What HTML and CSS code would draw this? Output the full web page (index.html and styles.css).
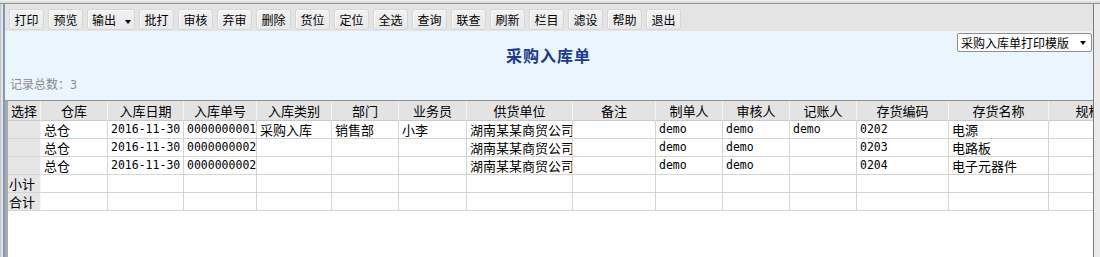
FILE: index.html
```html
<!DOCTYPE html>
<html lang="zh-CN">
<head>
    <meta charset="UTF-8">
    <title>采购入库单</title>
    <link rel="stylesheet" href="styles.css">
</head>
<body>
    <div class="topline"></div>
    <div class="frame">
        <div class="frame-left"></div>
        <div class="frame-center">
            <div class="toolbar">
                <button class="tb-btn">打印</button>
                <button class="tb-btn">预览</button>
                <button class="tb-btn tb-drop">输出 <span class="caret"></span></button>
                <button class="tb-btn">批打</button>
                <button class="tb-btn">审核</button>
                <button class="tb-btn">弃审</button>
                <button class="tb-btn">删除</button>
                <button class="tb-btn">货位</button>
                <button class="tb-btn">定位</button>
                <button class="tb-btn">全选</button>
                <button class="tb-btn">查询</button>
                <button class="tb-btn">联查</button>
                <button class="tb-btn">刷新</button>
                <button class="tb-btn">栏目</button>
                <button class="tb-btn">滤设</button>
                <button class="tb-btn">帮助</button>
                <button class="tb-btn">退出</button>
            </div>

            <div class="panel">
                <div class="panel-head">
                    <div class="title">采购入库单</div>
                    <div class="tpl">
                        <select class="tpl-select">
                            <option>采购入库单打印模版</option>
                        </select>
                        <span class="tpl-caret"></span>
                    </div>
                </div>
                <div class="count">记录总数：<span class="mono">3</span></div>
            </div>

            <div class="grid-wrap">
                <table class="grid">
                    <thead>
                        <tr>
                            <th class="c-sel">选择</th>
                            <th class="c-wh">仓库</th>
                            <th class="c-date">入库日期</th>
                            <th class="c-no">入库单号</th>
                            <th class="c-type">入库类别</th>
                            <th class="c-dept">部门</th>
                            <th class="c-emp">业务员</th>
                            <th class="c-sup">供货单位</th>
                            <th class="c-memo">备注</th>
                            <th class="c-p">制单人</th>
                            <th class="c-p">审核人</th>
                            <th class="c-p">记账人</th>
                            <th class="c-code">存货编码</th>
                            <th class="c-name">存货名称</th>
                            <th class="c-spec">规格</th>
                        </tr>
                    </thead>
                    <tbody>
                        <tr>
                            <td class="sel"></td>
                            <td>总仓</td>
                            <td class="mono">2016-11-30</td>
                            <td class="mono">0000000001</td>
                            <td>采购入库</td>
                            <td>销售部</td>
                            <td>小李</td>
                            <td>湖南某某商贸公司</td>
                            <td></td>
                            <td class="mono">demo</td>
                            <td class="mono">demo</td>
                            <td class="mono">demo</td>
                            <td class="mono">0202</td>
                            <td>电源</td>
                            <td></td>
                        </tr>
                        <tr>
                            <td class="sel"></td>
                            <td>总仓</td>
                            <td class="mono">2016-11-30</td>
                            <td class="mono">0000000002</td>
                            <td></td>
                            <td></td>
                            <td></td>
                            <td>湖南某某商贸公司</td>
                            <td></td>
                            <td class="mono">demo</td>
                            <td class="mono">demo</td>
                            <td></td>
                            <td class="mono">0203</td>
                            <td>电路板</td>
                            <td></td>
                        </tr>
                        <tr>
                            <td class="sel"></td>
                            <td>总仓</td>
                            <td class="mono">2016-11-30</td>
                            <td class="mono">0000000002</td>
                            <td></td>
                            <td></td>
                            <td></td>
                            <td>湖南某某商贸公司</td>
                            <td></td>
                            <td class="mono">demo</td>
                            <td class="mono">demo</td>
                            <td></td>
                            <td class="mono">0204</td>
                            <td>电子元器件</td>
                            <td></td>
                        </tr>
                        <tr>
                            <td class="sel">小计</td>
                            <td></td><td></td><td></td><td></td><td></td><td></td><td></td>
                            <td></td><td></td><td></td><td></td><td></td><td></td><td></td>
                        </tr>
                        <tr>
                            <td class="sel">合计</td>
                            <td></td><td></td><td></td><td></td><td></td><td></td><td></td>
                            <td></td><td></td><td></td><td></td><td></td><td></td><td></td>
                        </tr>
                    </tbody>
                </table>
            </div>
        </div>
        <div class="frame-right"></div>
    </div>
</body>
</html>
```

FILE: styles.css
```css
html, body {
    height: 100%;
}

body {
    margin: 0;
    display: flex;
    flex-direction: column;
    font-family: "Noto Sans CJK SC", sans-serif;
    font-size: 12px;
    color: #000;
    background: #fff;
    overflow: hidden;
}

.mono {
    font-family: "DejaVu Sans Mono", monospace;
    font-size: 11.5px;
}

/* window chrome */
.topline {
    height: 3px;
    background: linear-gradient(#f2f2f2, #d6d6d6);
    border-bottom: 1px solid #959595;
}

.frame {
    flex: 1;
    display: flex;
    min-height: 0;
}

.frame-left {
    width: 2px;
    border-left: 1px solid #c4c4c4;
    border-right: 2px solid #7f98c2;
    background: #e4e4e4;
}

.frame-center {
    flex: 1;
    display: flex;
    flex-direction: column;
    min-width: 0;
}

.frame-right {
    width: 6px;
    border-left: 1px solid #7c7c7c;
    background: #ebebeb;
}

/* toolbar */
.toolbar {
    height: 27px;
    box-sizing: border-box;
    padding: 5px 0 0 4px;
    display: flex;
    align-items: flex-start;
    gap: 4px;
    background: #e4e4e4;
}

.tb-btn {
    width: 35px;
    height: 21px;
    padding: 0;
    margin: 0;
    border: 1px solid #d6d6d6;
    border-radius: 3px;
    background: linear-gradient(#f2f2f2, #e8e8e8);
    box-shadow: inset 1px 1px 0 #fafafa;
    font-family: inherit;
    font-size: 12px;
    line-height: 19px;
    color: #000;
}

.tb-drop {
    width: 48px;
    text-align: left;
    padding-left: 4px;
}

.caret {
    display: inline-block;
    margin-left: 6px;
    vertical-align: middle;
    border-left: 3px solid transparent;
    border-right: 3px solid transparent;
    border-top: 4px solid #000;
}

/* header panel */
.panel {
    height: 69px;
    box-sizing: border-box;
    padding: 2px 1px 0 0;
    display: flex;
    flex-direction: column;
    background: #eaf5fe;
}

.panel-head {
    display: grid;
    grid-template-columns: 1fr auto 1fr;
}

.title {
    grid-column: 2;
    padding-top: 14px;
    font-size: 16px;
    font-weight: bold;
    line-height: 17px;
    letter-spacing: 1px;
    color: #1c3b8c;
}

.tpl {
    grid-column: 3;
    justify-self: end;
    position: relative;
}

.tpl-select {
    appearance: none;
    width: 135px;
    height: 19px;
    margin: 0;
    padding: 0 0 0 3px;
    border: 1px solid #8e8e8e;
    border-radius: 2px;
    background: #fff;
    font-family: inherit;
    font-size: 12px;
    line-height: 17px;
    color: #000;
}

.tpl-caret {
    position: absolute;
    right: 6px;
    top: 8px;
    border-left: 3px solid transparent;
    border-right: 3px solid transparent;
    border-top: 4px solid #000;
    pointer-events: none;
}

.count {
    margin-top: auto;
    padding: 0 0 8px 5px;
    line-height: 14px;
    color: #8a8a8a;
}

/* data grid */
.grid-wrap {
    flex: 1;
    overflow: hidden;
    border-top: 1px solid #8d8d8d;
    border-left: 3px solid #a9a9a9;
    background: #fff;
}

.grid {
    table-layout: fixed;
    width: 1121px;
    border-collapse: separate;
    border-spacing: 0;
    font-size: 13px;
}

.grid th,
.grid td {
    box-sizing: border-box;
    padding: 0 3px;
    white-space: nowrap;
    overflow: hidden;
    border-right: 1px solid #d4d4d4;
    border-bottom: 1px solid #d4d4d4;
    text-align: left;
    font-weight: normal;
}

.grid th {
    height: 20px;
    line-height: 19px;
    text-align: center;
    background: #e3e3e3;
    border-right-color: #f4f4f4;
    border-bottom-color: #c9c9c9;
}

.grid td {
    height: 18px;
    line-height: 17px;
}

.grid td.sel {
    padding: 0 1px;
    background: #e6e6e6;
    border-right-color: #f4f4f4;
}

.grid td.mono {
    font-size: 11.5px;
}

.c-sel { width: 33px; }
.c-wh { width: 67px; }
.c-date { width: 76px; }
.c-no { width: 73px; }
.c-type { width: 75px; }
.c-dept { width: 67px; }
.c-emp { width: 68px; }
.c-sup { width: 106px; }
.c-memo { width: 83px; }
.c-p { width: 67px; }
.c-code { width: 92px; }
.c-name { width: 100px; }
.c-spec { width: 80px; }
```
